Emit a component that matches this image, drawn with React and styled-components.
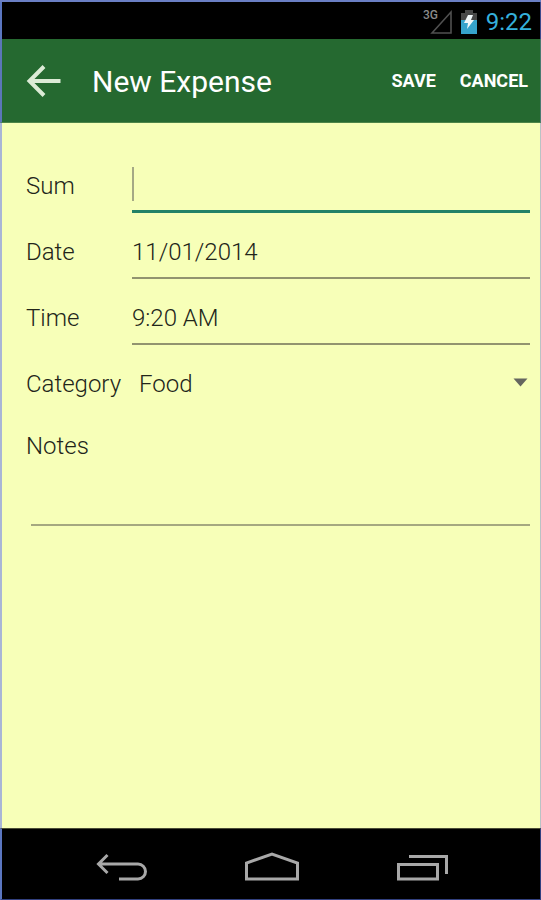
import React from "react";
import styled, { createGlobalStyle } from "styled-components";

const GlobalStyle = createGlobalStyle`
  *, *::before, *::after { box-sizing: border-box; }
  body { margin: 0; font-family: Roboto, sans-serif; }
  button, input, select, textarea { font: inherit; color: inherit; }
`;

const Screen = styled.div`
  display: flex;
  flex-direction: column;
  min-height: 100vh;
  border-top: 2px solid #6a7fc4;
  background: #000;
`;

const StatusBar = styled.div`
  display: flex;
  justify-content: flex-end;
  align-items: center;
  height: 37px;
  padding: 3px 8px 0 0;
  border-left: 2px solid #5b76c0;
  border-right: 1px solid #3d4a8c;
  background: #000;
`;

const Clock = styled.time`
  margin-left: 9px;
  font-size: 24px;
  line-height: 32px;
  color: #35b0dc;
`;

const Signal = styled.svg`
  width: 30px;
  height: 28px;
  margin-right: 8px;
`;

const Battery = styled.svg`
  width: 16px;
  height: 24px;
`;

const AppBar = styled.header`
  display: flex;
  align-items: center;
  height: 84px;
  padding: 0 12px 0 24px;
  border-left: 2px solid #5b76b8;
  border-right: 1px solid #4a7a70;
  border-bottom: 1px solid #4d8448;
  background: #256930;
  color: #fff;
`;

const BackButton = styled.button`
  display: flex;
  padding: 0;
  border: 0;
  background: none;
  color: #dcebd6;
`;

const Title = styled.h1`
  flex: 1;
  margin: 0 0 0 30px;
  padding-top: 2px;
  font-size: 30px;
  line-height: 40px;
  font-weight: 400;
`;

const Action = styled.button`
  margin-left: 24px;
  padding: 0;
  border: 0;
  background: none;
  font-size: 18px;
  line-height: 24px;
  font-weight: 700;
`;

const Form = styled.form`
  flex: 1;
  padding: 24px 10px 24px 24px;
  border-left: 2px solid #a9b5d6;
  border-right: 1px solid #b9c3c4;
  background: #f7ffb8;
  color: #22251a;
  font-size: 24px;
  font-weight: 300;
`;

const Row = styled.div`
  display: grid;
  grid-template-columns: 106px 1fr;
  height: 66px;
`;

const Label = styled.label`
  padding-top: 25px;
  line-height: 28px;
`;

const Field = styled.div`
  position: relative;
  display: flex;
`;

const TextInput = styled.input`
  width: 100%;
  min-width: 0;
  padding: 14px 0 0;
  border: 0;
  border-bottom: ${(p) => (p.$active ? "3px solid #238267" : "2px solid #92946f")};
  border-radius: 0;
  outline: 0;
  background: none;
`;

const Caret = styled.span`
  position: absolute;
  left: 0;
  top: 20px;
  width: 2px;
  height: 34px;
  background: #a5a985;
`;

const Select = styled.select`
  width: 100%;
  padding: 12px 24px 0 7px;
  border: 0;
  outline: 0;
  appearance: none;
  background: none;
`;

const DropArrow = styled.svg`
  position: absolute;
  right: 2px;
  top: 33px;
  width: 15px;
  height: 9px;
  pointer-events: none;
`;

const NotesBlock = styled.div`
  display: flex;
  flex-direction: column;
  padding-left: 5px;
`;

const NotesLabel = styled.label`
  margin: 21px 0 0 -5px;
  line-height: 28px;
`;

const NotesInput = styled.textarea`
  height: 66px;
  padding: 24px 0 0;
  border: 0;
  border-bottom: 2px solid #a5a880;
  outline: 0;
  resize: none;
  background: none;
`;

const NavBar = styled.nav`
  display: flex;
  justify-content: center;
  align-items: center;
  gap: 94px;
  height: 72px;
  padding: 6px 0 0 2px;
  border: 1px solid #32407f;
  border-left: 2px solid #5b76c0;
  border-top: 1px solid #4b4d36;
  background: #000;
`;

const NavButton = styled.button`
  display: flex;
  padding: 0;
  border: 0;
  background: none;
  color: #a8a8a8;
`;

const NavIcon = ({ children }) => (
  <svg width="56" height="32" viewBox="0 0 56 32" fill="none" stroke="currentColor" strokeWidth="3" aria-hidden="true">
    {children}
  </svg>
);

export default function App() {
  return (
    <>
      <GlobalStyle />
      <Screen>
        <StatusBar>
          <Signal viewBox="0 0 30 28" role="img" aria-label="Signal">
            <path d="M9 25 L28 4 V25 Z" fill="none" stroke="#505050" strokeWidth="1.6" />
            <text x="0" y="11" fontSize="12" fontWeight="500" fontFamily="Roboto, sans-serif" fill="#8a8a8a">3G</text>
          </Signal>
          <Battery viewBox="0 0 16 24" role="img" aria-label="Charging">
            <path d="M4 0h8v3h4v7H0V3h4z" fill="#484848" />
            <path d="M0 10h16v14H0z" fill="#36a3cc" />
            <path d="M7 5h5l-2 5h3l-7 9 1-6H3z" fill="#f2f8fa" />
          </Battery>
          <Clock>9:22</Clock>
        </StatusBar>
        <AppBar>
          <BackButton type="button" aria-label="Back">
            <svg width="36" height="34" viewBox="0 0 36 34" fill="none" stroke="currentColor" strokeWidth="4">
              <path d="M34.500 17H4M18 2.500L3.500 17l14.500 14.500" />
            </svg>
          </BackButton>
          <Title>New Expense</Title>
          <Action type="submit" form="expense">SAVE</Action>
          <Action type="button">CANCEL</Action>
        </AppBar>
        <Form id="expense" onSubmit={(e) => e.preventDefault()}>
          <Row>
            <Label htmlFor="sum">Sum</Label>
            <Field>
              <TextInput id="sum" inputMode="decimal" $active />
              <Caret />
            </Field>
          </Row>
          <Row>
            <Label htmlFor="date">Date</Label>
            <Field><TextInput id="date" defaultValue="11/01/2014" /></Field>
          </Row>
          <Row>
            <Label htmlFor="time">Time</Label>
            <Field><TextInput id="time" defaultValue="9:20 AM" /></Field>
          </Row>
          <Row>
            <Label htmlFor="category">Category</Label>
            <Field>
              <Select id="category" defaultValue="Food">
                <option>Food</option>
              </Select>
              <DropArrow viewBox="0 0 15 9" aria-hidden="true">
                <path d="M0.500 0.500h14L7.500 8.500z" fill="#65665f" />
              </DropArrow>
            </Field>
          </Row>
          <NotesBlock>
            <NotesLabel htmlFor="notes">Notes</NotesLabel>
            <NotesInput id="notes" />
          </NotesBlock>
        </Form>
        <NavBar>
          <NavButton type="button" aria-label="Back">
            <NavIcon>
              <path d="M4 13H44a7.500 7.500 0 0 1 0 15H25M13.500 4L4.500 13l9 9" />
            </NavIcon>
          </NavButton>
          <NavButton type="button" aria-label="Home">
            <NavIcon>
              <path d="M2.500 28V12L28 3l25.500 9V28z" />
            </NavIcon>
          </NavButton>
          <NavButton type="button" aria-label="Recent apps">
            <NavIcon>
              <path d="M4.500 13.500h39V28h-39zM15 5.500H52.500V23" />
            </NavIcon>
          </NavButton>
        </NavBar>
      </Screen>
    </>
  );
}
